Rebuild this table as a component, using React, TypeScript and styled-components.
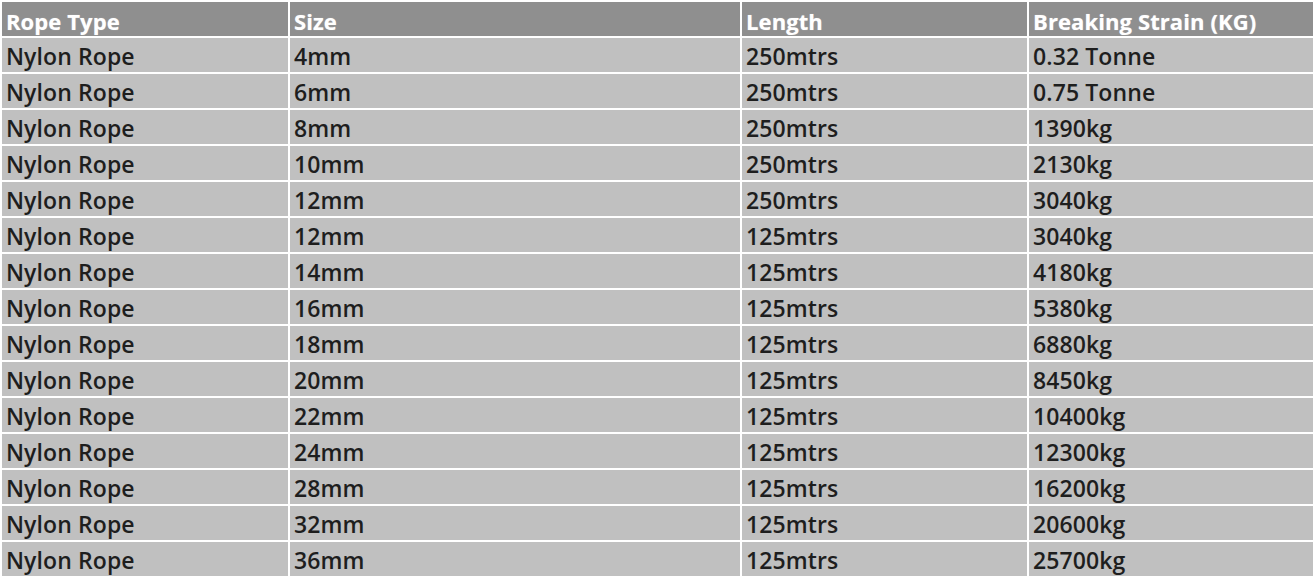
import React from "react";
import styled, { createGlobalStyle } from "styled-components";

const Global = createGlobalStyle`
  html, body { margin: 0; padding: 0; background: #ffffff; }
  body { font-family: "Open Sans", "Liberation Sans", sans-serif; }
`;

const Table = styled.table`
  border-collapse: separate;
  border-spacing: 2px;
  margin: 0;
  width: 1315px;
  table-layout: fixed;
  background: #ffffff;
`;

const Col = styled.col<{ $w: number }>`
  width: ${(p) => p.$w}px;
`;

const HeadCell = styled.th`
  box-sizing: border-box;
  height: 34px;
  padding: 5px 0 1px 4px;
  line-height: 28px;
  background: #8f8f8f;
  color: #ffffff;
  font-size: 22px;
  font-weight: 700;
  text-align: left;
  letter-spacing: 0.1px;
  text-shadow: 0 0 1px rgba(255, 255, 255, 0.5);
  vertical-align: middle;
  white-space: nowrap;
  overflow: hidden;
`;

const Cell = styled.td`
  box-sizing: border-box;
  height: 34px;
  padding: 4px 0 2px 4px;
  line-height: 28px;
  background: #c0c0c0;
  color: #1e1e1e;
  font-size: 23px;
  font-weight: 600;
  letter-spacing: 0.1px;
  vertical-align: middle;
  white-space: nowrap;
  overflow: hidden;
`;

const rows: [string, string, string][] = [
  ["4mm", "250mtrs", "0.32 Tonne"],
  ["6mm", "250mtrs", "0.75 Tonne"],
  ["8mm", "250mtrs", "1390kg"],
  ["10mm", "250mtrs", "2130kg"],
  ["12mm", "250mtrs", "3040kg"],
  ["12mm", "125mtrs", "3040kg"],
  ["14mm", "125mtrs", "4180kg"],
  ["16mm", "125mtrs", "5380kg"],
  ["18mm", "125mtrs", "6880kg"],
  ["20mm", "125mtrs", "8450kg"],
  ["22mm", "125mtrs", "10400kg"],
  ["24mm", "125mtrs", "12300kg"],
  ["28mm", "125mtrs", "16200kg"],
  ["32mm", "125mtrs", "20600kg"],
  ["36mm", "125mtrs", "25700kg"],
];

export default function App() {
  return (
    <>
      <Global />
      <Table>
        <colgroup>
          <Col $w={286} />
          <Col $w={450} />
          <Col $w={285} />
          <Col $w={284} />
        </colgroup>
        <thead>
          <tr>
            <HeadCell>Rope Type</HeadCell>
            <HeadCell>Size</HeadCell>
            <HeadCell>Length</HeadCell>
            <HeadCell>Breaking Strain (KG)</HeadCell>
          </tr>
        </thead>
        <tbody>
          {rows.map((r, i) => (
            <tr key={i}>
              <Cell>Nylon Rope</Cell>
              <Cell>{r[0]}</Cell>
              <Cell>{r[1]}</Cell>
              <Cell>{r[2]}</Cell>
            </tr>
          ))}
        </tbody>
      </Table>
    </>
  );
}
